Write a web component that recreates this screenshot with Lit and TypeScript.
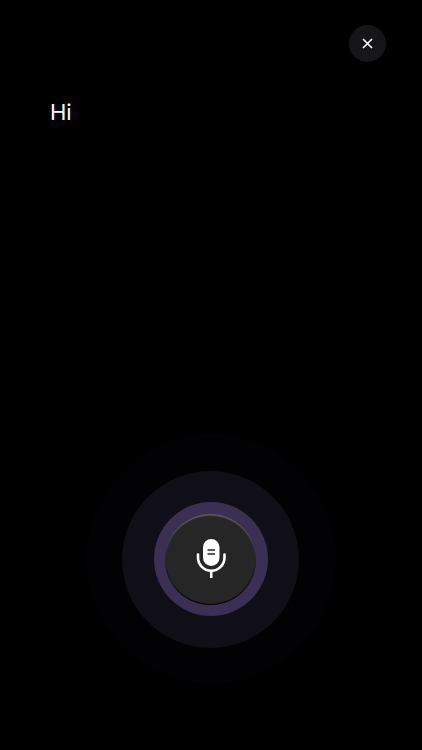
import { LitElement, html, css } from "lit";
import { customElement } from "lit/decorators.js";

@customElement("app-root")
export class AppRoot extends LitElement {
  static styles = css`
    :host {
      display: block;
      width: 422px;
      height: 750px;
      background: #000;
      font-family: "Inter", "Liberation Sans", sans-serif;
      overflow: hidden;
    }
    .page {
      display: flex;
      flex-direction: column;
      height: 750px;
      box-sizing: border-box;
      padding: 25px 36px 0 50px;
    }
    .top {
      display: flex;
      justify-content: flex-end;
    }
    .close {
      width: 37px;
      height: 37px;
      border: 0;
      padding: 0;
      border-radius: 50%;
      background: #161618;
      display: flex;
      align-items: center;
      justify-content: center;
    }
    .close svg {
      display: block;
    }
    .hi {
      margin: 25px 0 0;
      color: #fff;
      font-size: 22px;
      line-height: 50px;
      font-weight: 400;
      flex: 1;
    }
    .voice {
      margin: 0 0 66px -50px;
      width: 421px;
      display: flex;
      justify-content: center;
    }
    .ring {
      border-radius: 50%;
      display: flex;
      align-items: center;
      justify-content: center;
      flex: none;
    }
    .r1 {
      width: 250px;
      height: 250px;
      background: #020204;
    }
    .r2 {
      width: 177px;
      height: 177px;
      background: #100f17;
    }
    .r3 {
      width: 114px;
      height: 114px;
      background: #3b2f53;
    }
    .mic {
      width: 91px;
      height: 91px;
      border: 0;
      padding: 0 0 2px;
      box-sizing: border-box;
      border-radius: 50%;
      background: #262626;
      box-shadow:
        inset 0 2px 1.5px -0.5px #636265,
        inset 0 -1px 1px #000;
      display: flex;
      align-items: center;
      justify-content: center;
    }
    .mic svg {
      display: block;
    }
  `;

  render() {
    return html`
      <div class="page">
        <div class="top">
          <button class="close" aria-label="Close">
            <svg width="11" height="11" viewBox="0 0 11 11">
              <path d="M1 1 L10 10 M10 1 L1 10" stroke="#fff" stroke-width="1.6" fill="none"></path>
            </svg>
          </button>
        </div>
        <h1 class="hi">Hi</h1>
        <div class="voice">
          <div class="ring r1">
            <div class="ring r2">
              <div class="ring r3">
                <button class="mic" aria-label="Microphone">
                  <svg width="30" height="39" viewBox="0 0 30 39">
                    <rect x="7" y="0" width="16.5" height="27" rx="8.25" fill="#fff"></rect>
                    <path d="M12 11 H18.5" stroke="#262626" stroke-width="1.3" stroke-linecap="round"></path>
                    <path d="M12 15 H18.5" stroke="#262626" stroke-width="1.3" stroke-linecap="round"></path>
                    <path d="M2 15.5 V18.5 A13 13 0 0 0 28.5 18.5 V15.5" stroke="#fff" stroke-width="2.6" stroke-linecap="round" fill="none"></path>
                    <path d="M15.25 31 V39" stroke="#fff" stroke-width="2.6"></path>
                  </svg>
                </button>
              </div>
            </div>
          </div>
        </div>
      </div>
    `;
  }
}
